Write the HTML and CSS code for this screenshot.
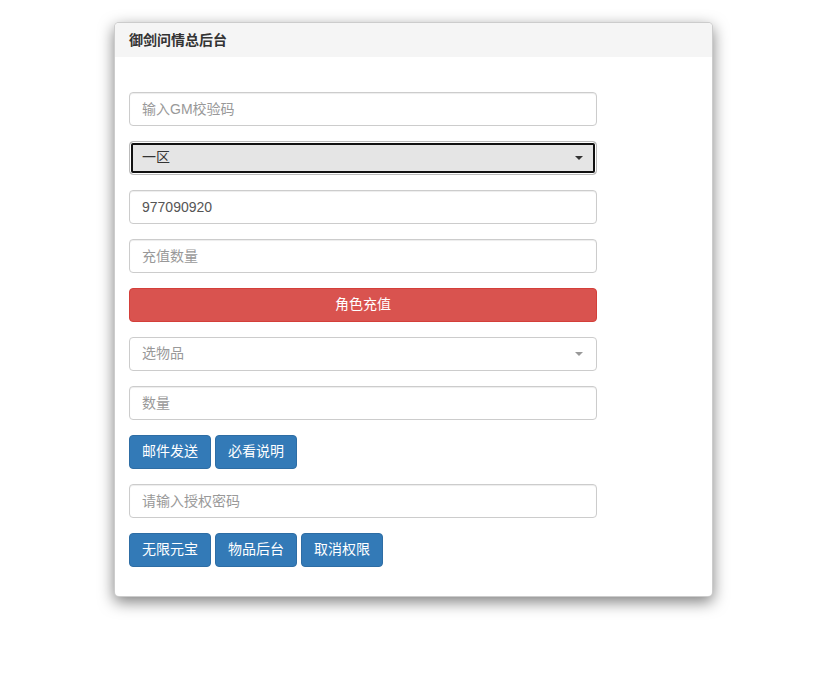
FILE: index.html
```html
<!DOCTYPE html>
<html lang="zh-CN">
<head>
<meta charset="utf-8">
<title>御剑问情总后台</title>
<link rel="stylesheet" href="styles.css">
</head>
<body>
<div class="page">
<div class="panel">
  <div class="panel-heading">御剑问情总后台</div>
  <div class="panel-body">
    <input class="form-control" type="text" placeholder="输入GM校验码">
    <div class="select focused"><span>一区</span><i class="caret"></i></div>
    <input class="form-control" type="text" value="977090920">
    <input class="form-control" type="text" placeholder="充值数量">
    <button class="btn btn-danger btn-block">角色充值</button>
    <div class="select"><span class="ph">选物品</span><i class="caret light"></i></div>
    <input class="form-control" type="text" placeholder="数量">
    <div class="btn-row">
      <button class="btn btn-primary">邮件发送</button>
      <button class="btn btn-primary">必看说明</button>
    </div>
    <input class="form-control" type="password" placeholder="请输入授权密码">
    <div class="btn-row">
      <button class="btn btn-primary">无限元宝</button>
      <button class="btn btn-primary">物品后台</button>
      <button class="btn btn-primary">取消权限</button>
    </div>
  </div>
</div>
</div>
</body>
</html>
```
FILE: styles.css
```css
* { box-sizing: border-box; }
html, body { margin: 0; padding: 0; background: #fff; }
body {
  font-family: "Liberation Sans", "Noto Sans CJK SC", sans-serif;
  font-size: 14px;
  line-height: 1.42857;
  color: #333;
}
.page {
  padding: 22px 0 60px 114px;
  min-height: 677px;
}
.panel {
  width: 599px;
  border: 1px solid rgba(0,0,0,.2);
  border-radius: 5px;
  background: #fff;
  box-shadow: 0 5px 15px rgba(0,0,0,.5);
}
.panel-heading {
  height: 34px;
  padding: 8px 14px;
  background: #f5f5f5;
  font-weight: bold;
  font-size: 14px;
  line-height: 18px;
  color: #333;
  border-radius: 4px 4px 0 0;
}
.panel-body {
  padding: 35px 115px 29px 14px;
  display: flex;
  flex-direction: column;
  gap: 15px;
}
.form-control {
  display: block;
  width: 468px;
  height: 34px;
  padding: 6px 12px;
  font: inherit;
  color: #555;
  border: 1px solid #ccc;
  border-radius: 4px;
  box-shadow: inset 0 1px 1px rgba(0,0,0,.075);
  outline: none;
  background: #fff;
}
.form-control::placeholder { color: #999; }
.select {
  width: 468px;
  height: 34px;
  padding: 6px 12px;
  border: 1px solid #ccc;
  border-radius: 4px;
  display: flex;
  align-items: center;
  justify-content: space-between;
  color: #333;
  background: #fff;
}
.select.focused {
  background: #e5e5e5;
  border-color: #bbb;
  box-shadow: inset 0 0 0 1px #fff, inset 0 0 0 3px #111;
  border-radius: 4px;
}
.select .ph { color: #999; }
.caret {
  width: 0; height: 0;
  border-left: 4px solid transparent;
  border-right: 4px solid transparent;
  border-top: 4px solid #333;
  margin-right: 1px;
}
.caret.light { border-top-color: #999; }
.btn {
  height: 34px;
  padding: 6px 12px;
  font: inherit;
  border: 1px solid transparent;
  border-radius: 4px;
  color: #fff;
  cursor: pointer;
}
.btn-block { width: 468px; }
.btn-danger { background: #d9534f; border-color: #d43f3a; }
.btn-primary { background: #337ab7; border-color: #2e6da4; }
.btn-row { display: flex; gap: 4px; }
```
